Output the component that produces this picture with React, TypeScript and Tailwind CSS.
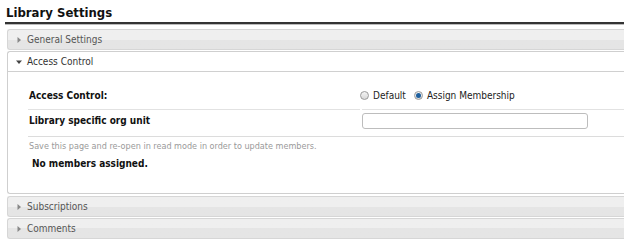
const font = { fontFamily: '"DejaVu Sans Condensed", "DejaVu Sans", Verdana, sans-serif' };

const Caret = ({ open }: { open?: boolean }) => (
  <svg width="6" height="6" viewBox="0 0 6 6" className="shrink-0">
    {open ? <path d="M0 1.5 L6 1.5 L3 5 Z" fill="#444" /> : <path d="M1.5 0 L5 3 L1.5 6 Z" fill="#888" />}
  </svg>
);

const CollapsedHeader = ({ title }: { title: string }) => (
  <div className="flex items-center gap-[5px] h-[21px] pl-[8px] rounded-l-[3px] border border-r-0 border-[#d6d6d6] bg-gradient-to-b from-[#efefef] from-50% to-[#e5e5e5] to-50% text-[10px] text-[#555]">
    <Caret />
    <span>{title}</span>
  </div>
);

const Radio = ({ checked, label }: { checked?: boolean; label: string }) => (
  <label className="flex items-center gap-[4px]">
    <span className="w-[9px] h-[9px] rounded-full border border-[#9a9a9a] bg-gradient-to-b from-[#f4f4f4] to-[#d8d8d8] flex items-center justify-center">
      {checked && <span className="w-[5px] h-[5px] rounded-full bg-[#1d5f9e]" />}
    </span>
    <span>{label}</span>
  </label>
);

export default function App() {
  return (
    <div className="w-[624px] h-[250px] overflow-hidden bg-white text-[#111]" style={font}>
      <div className="pl-[5px] pt-[5px]">
        <h1 className="pl-[1px] text-[13px] font-bold leading-[16px] text-[#111]">Library Settings</h1>
        <div className="mt-[1px] h-[3px] border-t-2 border-[#333] border-b border-b-[#bbb]" />
        <div className="pl-[2px] mt-[4px] w-[660px] flex flex-col">
          <CollapsedHeader title="General Settings" />

          <div className="mt-[1px] rounded-l-[3px] border border-r-0 border-[#cfcfcf] bg-white h-[143px]">
            <div className="flex items-center gap-[5px] h-[20px] pl-[8px] border-b border-[#d0d0d0] text-[10px] text-[#333]">
              <Caret open />
              <span>Access Control</span>
            </div>
            <div className="pl-[20px] pt-[15px] text-[10px]">
              <div className="flex items-center h-[16px]">
                <span className="w-[332px] pl-[1px] font-bold">Access Control:</span>
                <div className="flex items-center gap-[8px] text-[#222]">
                  <Radio label="Default" />
                  <Radio checked label="Assign Membership" />
                </div>
              </div>
              <div className="mt-[6px] flex">
                <div className="w-[332px] border-t border-[#e2e2e2] pt-[3px] pl-[1px] h-[27px] font-bold">
                  Library specific org unit
                </div>
                <div className="ml-[2px] flex-1 border-t border-[#e2e2e2] pt-[3px]">
                  <div className="w-[226px] h-[16px] rounded-[3px] border border-[#bdbdbd] bg-white" />
                </div>
              </div>
              <div className="border-t border-[#dcdcdc] pt-[3px] pl-[1px] text-[9px] leading-[12px] text-[#9a9a9a]">
                Save this page and re-open in read mode in order to update members.
              </div>
              <div className="mt-[4px] pl-[4px] font-bold text-[10px]">No members assigned.</div>
            </div>
          </div>

          <div className="mt-[2px]">
            <CollapsedHeader title="Subscriptions" />
          </div>
          <div className="mt-[1px]">
            <CollapsedHeader title="Comments" />
          </div>
        </div>
      </div>
    </div>
  );
}
